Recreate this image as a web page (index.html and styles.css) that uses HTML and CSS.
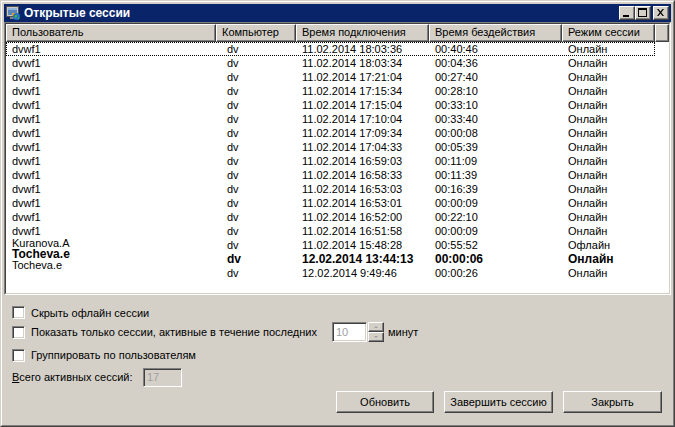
FILE: index.html
```html
<!DOCTYPE html>
<html lang="ru">
<head>
<meta charset="utf-8">
<title>Открытые сессии</title>
<link rel="stylesheet" href="styles.css">
</head>
<body>
<div class="window">
  <div class="frame">
    <div class="titlebar">
      <svg class="app-icon" viewBox="0 0 16 16" width="16" height="16">
        <rect x="1.5" y="1.5" width="12" height="10" fill="#c8c8c8" stroke="#505050"/>
        <rect x="3" y="3" width="9" height="7" fill="#5a86b8"/>
        <rect x="3" y="3" width="9" height="2" fill="#8fb3d9"/>
        <rect x="5" y="12" width="6" height="2" fill="#808080"/>
        <rect x="7" y="8" width="4" height="3" fill="#f0a020"/>
        <circle cx="11.5" cy="11.5" r="3.5" fill="#1f6fd0"/>
        <path d="M9.5 10.5 L11.5 9.5 L12.5 11 L11 13 L9.5 12.5 Z" fill="#40b040"/>
        <path d="M12.5 13 L14 12 L14.5 13.5 L13 14.5 Z" fill="#40b040"/>
      </svg>
      <span class="title">Открытые сессии</span>
      <div class="caption-btns">
        <div class="cap"><svg viewBox="0 0 14 12" width="14" height="12"><rect x="3" y="8" width="6" height="2" fill="#000"/></svg></div>
        <div class="cap"><svg viewBox="0 0 14 12" width="14" height="12"><rect x="2.5" y="1.5" width="8" height="8" fill="none" stroke="#000"/><rect x="2" y="1" width="9" height="2" fill="#000"/></svg></div>
        <div class="cap close"><svg viewBox="0 0 14 12" width="14" height="12"><path d="M3 2 L4.5 2 L6.5 4.5 L8.5 2 L10 2 L7.3 5.5 L10 9 L8.5 9 L6.5 6.5 L4.5 9 L3 9 L5.7 5.5 Z" fill="#000"/></svg></div>
      </div>
    </div>

    <div class="client">
      <div class="listview">
        <div class="listinner">
          <div class="lv-header">
            <div class="hcell c1">Пользователь</div>
            <div class="hcell c2">Компьютер</div>
            <div class="hcell c3">Время подключения</div>
            <div class="hcell c4">Время бездействия</div>
            <div class="hcell c5">Режим сессии</div>
            <div class="hcell cfill"></div>
          </div>
          <div class="rows">
            <div class="row focus"><span>dvwf1</span><span>dv</span><span>11.02.2014 18:03:36</span><span>00:40:46</span><span>Онлайн</span></div>
            <div class="row"><span>dvwf1</span><span>dv</span><span>11.02.2014 18:03:34</span><span>00:04:36</span><span>Онлайн</span></div>
            <div class="row"><span>dvwf1</span><span>dv</span><span>11.02.2014 17:21:04</span><span>00:27:40</span><span>Онлайн</span></div>
            <div class="row"><span>dvwf1</span><span>dv</span><span>11.02.2014 17:15:34</span><span>00:28:10</span><span>Онлайн</span></div>
            <div class="row"><span>dvwf1</span><span>dv</span><span>11.02.2014 17:15:04</span><span>00:33:10</span><span>Онлайн</span></div>
            <div class="row"><span>dvwf1</span><span>dv</span><span>11.02.2014 17:10:04</span><span>00:33:40</span><span>Онлайн</span></div>
            <div class="row"><span>dvwf1</span><span>dv</span><span>11.02.2014 17:09:34</span><span>00:00:08</span><span>Онлайн</span></div>
            <div class="row"><span>dvwf1</span><span>dv</span><span>11.02.2014 17:04:33</span><span>00:05:39</span><span>Онлайн</span></div>
            <div class="row"><span>dvwf1</span><span>dv</span><span>11.02.2014 16:59:03</span><span>00:11:09</span><span>Онлайн</span></div>
            <div class="row"><span>dvwf1</span><span>dv</span><span>11.02.2014 16:58:33</span><span>00:11:39</span><span>Онлайн</span></div>
            <div class="row"><span>dvwf1</span><span>dv</span><span>11.02.2014 16:53:03</span><span>00:16:39</span><span>Онлайн</span></div>
            <div class="row"><span>dvwf1</span><span>dv</span><span>11.02.2014 16:53:01</span><span>00:00:09</span><span>Онлайн</span></div>
            <div class="row"><span>dvwf1</span><span>dv</span><span>11.02.2014 16:52:00</span><span>00:22:10</span><span>Онлайн</span></div>
            <div class="row"><span>dvwf1</span><span>dv</span><span>11.02.2014 16:51:58</span><span>00:00:09</span><span>Онлайн</span></div>
            <div class="row"><span class="tight up1">Kuranova.A</span><span>dv</span><span>11.02.2014 15:48:28</span><span>00:55:52</span><span>Офлайн</span></div>
            <div class="row bold"><span class="tight up2">Tocheva.e</span><span>dv</span><span>12.02.2014 13:44:13</span><span>00:00:06</span><span>Онлайн</span></div>
            <div class="row"><span class="tight up3">Tocheva.e</span><span>dv</span><span>12.02.2014 9:49:46</span><span>00:00:26</span><span>Онлайн</span></div>
          </div>
        </div>
      </div>

      <div class="options">
        <div class="opt opt1"><span class="checkbox"></span><span>Скрыть офлайн сессии</span></div>
        <div class="opt opt2">
          <span class="checkbox"></span><span class="spin-label">Показать только сессии, активные в течение последних</span>
          <span class="spin-input">10</span>
          <span class="spin-btns"><span class="spin-btn"><i class="arr up"></i></span><span class="spin-btn"><i class="arr down"></i></span></span>
          <span class="unit">минут</span>
        </div>
        <div class="opt opt3"><span class="checkbox"></span><span>Группировать по пользователям</span></div>
        <div class="opt total"><span class="total-label"><u>В</u>сего активных сессий:</span><span class="count-box">17</span></div>
        <div class="buttons">
          <div class="btn w98">Обновить</div>
          <div class="btn w109">Завершить сессию</div>
          <div class="btn w99">Закрыть</div>
        </div>
      </div>
    </div>
  </div>
</div>
</body>
</html>
```

FILE: styles.css
```css
* { box-sizing: border-box; }
html, body { margin: 0; padding: 0; }
body {
  width: 675px;
  height: 427px;
  overflow: hidden;
  font-family: "Liberation Sans", Arial, sans-serif;
  font-size: 11px;
  color: #000;
  background: #d4d0c8;
}
.window {
  width: 675px;
  height: 427px;
  border: 1px solid;
  border-color: #d4d0c8 #404040 #404040 #d4d0c8;
}
.frame {
  height: 100%;
  border: 1px solid;
  border-color: #fff #808080 #808080 #fff;
  padding: 2px;
  background: #d4d0c8;
  display: flex;
  flex-direction: column;
}
.titlebar {
  height: 18px;
  flex: none;
  background: #0a246a;
  display: flex;
  align-items: center;
  padding: 0 2px 0 1px;
}
.app-icon { flex: none; display: block; }
.title {
  flex: 1;
  margin-left: 3px;
  color: #fff;
  font-weight: bold;
  font-size: 12px;
  white-space: nowrap;
}
.caption-btns { display: flex; }
.cap {
  width: 16px;
  height: 14px;
  background: #d4d0c8;
  border: 1px solid;
  border-color: #fff #404040 #404040 #fff;
  box-shadow: inset -1px -1px #808080;
  display: flex;
}
.cap svg { display: block; }
.cap.close { margin-left: 2px; }

.client { flex: 1; display: flex; flex-direction: column; }

.listview {
  height: 273px;
  flex: none;
  border: 1px solid;
  border-color: #808080 #fff #fff #808080;
}
.listinner {
  height: 100%;
  border: 1px solid;
  border-color: #404040 #d4d0c8 #d4d0c8 #404040;
  background: #fff;
  overflow: hidden;
}
.lv-header { display: flex; height: 18px; }
.hcell {
  height: 18px;
  flex: none;
  background: #d4d0c8;
  border: 1px solid;
  border-color: #fff #404040 #404040 #fff;
  box-shadow: inset -1px -1px #808080;
  padding-left: 5px;
  line-height: 15px;
  white-space: nowrap;
  overflow: hidden;
}
.c1 { width: 210px; }
.c2 { width: 80px; }
.c3 { width: 133px; }
.c4 { width: 133px; }
.c5 { width: 93px; }
.cfill { flex: 1; }

.row {
  display: grid;
  grid-template-columns: 210px 80px 133px 133px 93px;
  width: 649px;
  height: 14px;
  line-height: 14px;
}
.row > span { padding-left: 6px; white-space: nowrap; }
.row > span:nth-child(2) { padding-left: 11px; }
.row.focus { outline: 1px dotted #000; outline-offset: -1px; }
.row.bold { font-weight: bold; font-size: 12px; }
.row > span.tight { line-height: 11px; height: 11px; }
.up1 { margin-top: 0; }
.up2 { margin-top: -3px; }
.up3 { margin-top: -6px; }

.options {
  flex: 1;
  display: flex;
  flex-direction: column;
  padding: 8px 0 0 8px;
}
.opt { display: flex; align-items: center; height: 20px; white-space: nowrap; }
.opt1 { height: 19px; }
.opt3 { margin-top: 3px; }
.total { margin-top: 2px; }
.checkbox {
  width: 13px;
  height: 13px;
  flex: none;
  margin-right: 6px;
  background: #fff;
  border: 1px solid;
  border-color: #808080 #fff #fff #808080;
  box-shadow: inset 1px 1px #404040, inset -1px -1px #d4d0c8;
}
.spin-label { width: 301px; flex: none; }
.spin-input {
  width: 35px;
  height: 20px;
  flex: none;
  background: #fff;
  color: #a0a0a0;
  border: 1px solid;
  border-color: #808080 #fff #fff #808080;
  box-shadow: inset 1px 1px #404040, inset -1px -1px #d4d0c8;
  padding-left: 3px;
  line-height: 18px;
}
.spin-btns { width: 16px; height: 20px; flex: none; display: flex; flex-direction: column; margin-left: 1px; }
.spin-btn {
  height: 10px;
  background: #d4d0c8;
  border: 1px solid;
  border-color: #fff #404040 #404040 #fff;
  box-shadow: inset -1px -1px #808080;
  display: flex;
  align-items: center;
  justify-content: center;
}
.arr { width: 0; height: 0; border-left: 2px solid transparent; border-right: 2px solid transparent; }
.arr.up { border-bottom: 2px solid #a0a0a0; }
.arr.down { border-top: 2px solid #a0a0a0; }
.unit { margin-left: 4px; }
.total-label { width: 131px; flex: none; padding-left: 0; }
.count-box {
  width: 39px;
  height: 19px;
  flex: none;
  background: #d4d0c8;
  color: #a0a0a0;
  border: 1px solid;
  border-color: #808080 #fff #fff #808080;
  box-shadow: inset 1px 1px #404040, inset -1px -1px #d4d0c8;
  padding-left: 3px;
  line-height: 17px;
}
.buttons {
  display: flex;
  justify-content: flex-end;
  gap: 10px;
  padding-right: 9px;
  margin-top: 4px;
}
.btn {
  height: 22px;
  background: #d4d0c8;
  border: 1px solid;
  border-color: #fff #404040 #404040 #fff;
  box-shadow: inset -1px -1px #808080;
  display: flex;
  align-items: center;
  justify-content: center;
  white-space: nowrap;
}
.w98 { width: 98px; }
.w109 { width: 109px; }
.w99 { width: 99px; }
```
